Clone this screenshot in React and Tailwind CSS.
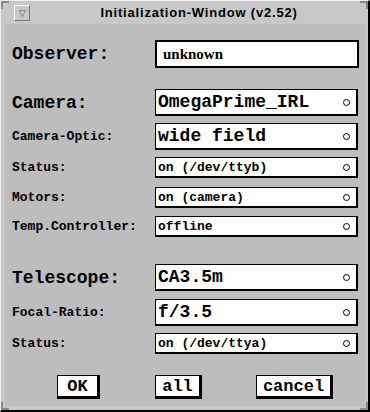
import React from "react";

const mono = { fontFamily: '"Liberation Mono", "Courier New", monospace' };

function Choice({ value, big, height }) {
  return (
    <div
      className={`w-[203px] ${height} bg-white border border-black border-r-2 border-b-2 flex items-center pl-[2px] pr-[6px] font-bold text-black`}
    >
      <span className={`flex-1 ${big ? "text-[18px]" : "text-[13px]"} leading-none whitespace-pre`} style={mono}>
        {value}
      </span>
      <span className="w-[7px] h-[7px] rounded-full border border-black" />
    </div>
  );
}

function Row({ label, big, value, height, mt }) {
  return (
    <div className={`flex items-center ${mt}`}>
      <div
        className={`w-[150px] pl-[7px] font-bold leading-none text-black whitespace-pre ${big ? "text-[18px]" : "text-[13px]"}`}
        style={mono}
      >
        {label}
      </div>
      <Choice value={value} big={big || height === "h-[27px]"} height={height} />
    </div>
  );
}

function Btn({ children, width }) {
  return (
    <button
      className={`${width} h-[24px] bg-white border border-black border-r-[3px] border-b-[3px] text-[17px] font-bold leading-none text-black flex items-center justify-center`}
      style={mono}
    >
      {children}
    </button>
  );
}

export default function App() {
  return (
    <div className="relative w-[370px] h-[412px] bg-[#c8c8c8] border-l border-t border-l-[#f0f0f0] border-t-[#f0f0f0] border-r-2 border-b-2 border-r-black border-b-black flex flex-col overflow-hidden">
      {/* title bar */}
      <div className="h-[23px] flex items-center">
        <div className="ml-[13px] w-[16px] h-[16px] border border-t-white border-l-white border-r-[#777] border-b-[#777] flex items-center justify-center text-[9px] text-[#555] leading-none">
          ▽
        </div>
        <div
          className="flex-1 text-center text-[13px] font-bold tracking-[0.8px] text-black"
          style={{ fontFamily: '"Liberation Sans", Arial, sans-serif' }}
        >
          Initialization-Window (v2.52)
        </div>
      </div>

      {/* body */}
      <div className="flex-1 ml-[4px] mr-[3px] mb-[4px] bg-[#bdbdbd] pt-[16px]">
        <div className="flex items-center">
          <div className="w-[150px] pl-[7px] text-[18px] leading-none font-bold text-black" style={mono}>
            Observer:
          </div>
          <div className="w-[204px] h-[28px] bg-white border-2 border-black flex items-center pl-[6px]">
            <span
              className="text-[15px] font-bold text-black leading-none"
              style={{ fontFamily: '"Liberation Serif", "Times New Roman", serif' }}
            >
              unknown
            </span>
          </div>
        </div>

        <Row label="Camera:" big value="OmegaPrime_IRL" height="h-[27px]" mt="mt-[21px]" />
        <Row label="Camera-Optic:" value="wide field" height="h-[27px]" mt="mt-[7px]" />
        <Row label="Status:" value="on (/dev/ttyb)" height="h-[21px]" mt="mt-[7px]" />
        <Row label="Motors:" value="on (camera)" height="h-[21px]" mt="mt-[9px]" />
        <Row label="Temp.Controller:" value="offline" height="h-[21px]" mt="mt-[8px]" />

        <Row label="Telescope:" big value="CA3.5m" height="h-[27px]" mt="mt-[27px]" />
        <Row label="Focal-Ratio:" value="f/3.5" height="h-[27px]" mt="mt-[8px]" />
        <Row label="Status:" value="on (/dev/ttya)" height="h-[21px]" mt="mt-[7px]" />

        <div className="flex mt-[21px]">
          <div className="ml-[52px]">
            <Btn width="w-[43px]">OK</Btn>
          </div>
          <div className="ml-[55px]">
            <Btn width="w-[47px]">all</Btn>
          </div>
          <div className="ml-[54px]">
            <Btn width="w-[77px]">cancel</Btn>
          </div>
        </div>
      </div>

      {/* corner marks */}
      <div className="absolute left-0 top-0 w-[8px] h-[8px] border-l-2 border-t-2 border-[#888]" />
      <div className="absolute right-0 top-0 w-[8px] h-[8px] border-r-2 border-t-2 border-[#888]" />
      <div className="absolute left-0 bottom-0 w-[8px] h-[8px] border-l-2 border-b-2 border-[#888]" />
      <div className="absolute right-0 bottom-0 w-[8px] h-[8px] border-r-2 border-b-2 border-[#888]" />
    </div>
  );
}
